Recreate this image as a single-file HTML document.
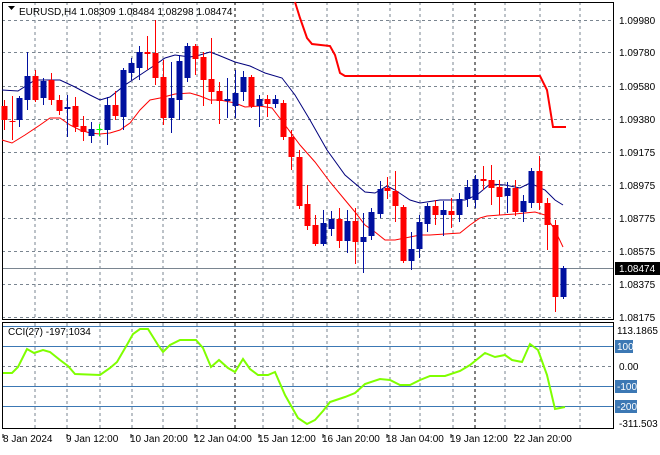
<!DOCTYPE html>
<html><head><meta charset="utf-8"><style>
body{margin:0;background:#fff;width:660px;height:450px;overflow:hidden}
svg text{font-family:"Liberation Sans",sans-serif;font-size:10px;fill:#000}
</style></head><body>
<svg width="660" height="450" xmlns="http://www.w3.org/2000/svg">
<rect width="660" height="450" fill="#fff"/>
<g stroke="#7a8590" stroke-dasharray="3,3" stroke-width="1">
<path d="M35 2V320M67 2V320M100 2V320M132 2V320M163 2V320M197 2V320M263 2V320M293 2V320M327 2V320M358 2V320M390 2V320M420 2V320M453 2V320M505 2V320M540 2V320M580 2V320"/>
<path d="M35 323V428M67 323V428M100 323V428M132 323V428M163 323V428M197 323V428M263 323V428M293 323V428M327 323V428M358 323V428M390 323V428M420 323V428M453 323V428M505 323V428M540 323V428M580 323V428"/>
<path d="M2 20.5H614M2 52.5H614M2 86.5H614M2 119.5H614M2 152.5H614M2 185.5H614M2 218.5H614M2 251.5H614M2 284.5H614M2 317.5H614M2 366.5H614"/>
</g>
<g stroke="#000" stroke-dasharray="3,3"><path d="M235 2V320M235 323V428M475 2V320M475 323V428"/></g>
<path d="M2 268.5H614" stroke="#7a8590"/>
<g stroke="#3c78b4"><path d="M2 326.5H614M2 346.5H614M2 386.5H614M2 406.5H614"/></g>
<rect x="2.5" y="2.5" width="611" height="317" fill="none" stroke="#000"/>
<rect x="2.5" y="322.5" width="611" height="106" fill="none" stroke="#000"/>
<path d="M2 90L18 91L35 80L60 80L75 87L90 95L100 100L110 97L125 85L140 75L155 65L165 58L175 55L190 57L200 55L210 52L218 55L235 62L250 66L265 73L282 78L295 95L310 120L327 150L345 175L365 192L375 193L387 186L395 190L410 200L420 203L440 200L465 200L477 195L490 184L505 185L520 188L530 183L545 190L555 200L563 205" fill="none" stroke="#00007c"/>
<path d="M2 140L12 143L25 135L40 125L50 118L60 118L70 125L80 130L90 133L100 134L110 133L120 130L130 123L140 110L150 100L160 98L175 94L190 93L200 96L210 100L220 100L235 103L245 107L260 106L272 108L285 125L300 145L315 162L330 182L345 200L355 212L365 225L375 232L385 240L395 240L405 238L420 235L430 235L445 234L460 233L470 225L480 218L487 216L500 215L515 214L525 213L535 212L545 215L555 230L563 247" fill="none" stroke="#f00"/>
<path d="M295 2L300 18L307 38L312 44L330 46L335 55L340 73L345 76L540 76L547 90L553 127L566 127" fill="none" stroke="#f00" stroke-width="2"/>
<g id="c"></g>
<path d="M3 373L12 373L18 367L27 349L34 353L43 350L50 352L60 360L68 366L75 374L100 375L110 368L117 362L128 343L133 334L140 329L148 329L158 345L163 352L170 345L180 340L196 340L203 348L211 367L219 360L228 368L235 372L243 359L250 369L258 375L268 375L275 372L285 395L298 418L307 424L315 420L323 411L330 402L345 397L355 393L365 384L380 379L390 380L400 385L410 385L420 380L430 376L445 376L460 371L470 365L485 353L495 357L505 355L512 360L522 362L530 344L538 350L547 375L555 409L560 408L565 407" fill="none" stroke="#7fff00" stroke-width="2"/>
<path d="M8 6L15 6L11.5 10Z" fill="#000"/>
<text x="19" y="15">EURUSD,H4  1.08309 1.08484 1.08298 1.08474</text>
<text x="8" y="335">CCI(27) -197.1034</text>
<g>
<text x="619" y="24">1.09980</text><text x="619" y="56">1.09780</text><text x="619" y="90">1.09580</text><text x="619" y="123">1.09380</text><text x="619" y="156">1.09175</text><text x="619" y="189">1.08975</text><text x="619" y="222">1.08775</text><text x="619" y="255">1.08575</text><text x="619" y="288">1.08375</text><text x="619" y="321">1.08175</text>
<rect x="615" y="262" width="45" height="13" fill="#000"/><text x="619" y="272" style="fill:#fff">1.08474</text>
<text x="617" y="334">113.1865</text>
<rect x="615" y="340" width="18" height="13" fill="#3c78b4"/><text x="617" y="350" style="fill:#fff">100</text>
<text x="619" y="370">0.00</text>
<rect x="615" y="380" width="22" height="13" fill="#3c78b4"/><text x="617" y="390" style="fill:#fff">-100</text>
<rect x="615" y="400" width="22" height="13" fill="#3c78b4"/><text x="617" y="410" style="fill:#fff">-200</text>
<text x="619" y="427">-311.503</text>
<text x="3" y="442">8 Jan 2024</text><text x="66" y="442">9 Jan 12:00</text><text x="130" y="442">10 Jan 20:00</text><text x="194" y="442">12 Jan 04:00</text><text x="258" y="442">15 Jan 12:00</text><text x="322" y="442">16 Jan 20:00</text><text x="386" y="442">18 Jan 04:00</text><text x="450" y="442">19 Jan 12:00</text><text x="514" y="442">22 Jan 20:00</text>
</g>
<path d="M3 434V438M67 434V438M131 434V438M195 434V438M259 434V438M323 434V438M387 434V438M451 434V438M515 434V438" stroke="#000"/>
</svg>
<script>
var d=[[4,'r',106,120,100,130],[12,'r',121,122,96,140],[19,'b',98,120,96,127],[27,'b',76,100,52,110],[35,'r',76,100,70,102],[43,'b',81,98,78,105],[51,'r',80,100,73,105],[59,'r',100,111,95,115],[67,'b',107,109,95,137],[75,'r',106,127,97,132],[83,'r',126,132,116,141],[91,'b',129,136,122,143],[99,'g',129,130,124,136],[107,'b',105,130,97,145],[115,'r',105,116,91,120],[123,'b',70,117,68,130],[131,'b',63,73,58,80],[139,'b',52,68,46,80],[147,'r',52,54,36,70],[155,'r',53,78,20,85],[163,'r',77,118,60,125],[171,'b',98,118,62,133],[179,'b',61,100,55,120],[187,'b',46,78,43,82],[195,'r',46,59,44,75],[203,'r',57,80,52,106],[211,'r',79,92,38,104],[219,'r',91,101,82,124],[227,'b',99,101,78,118],[235,'b',93,106,70,118],[243,'b',77,92,71,101],[251,'r',77,106,75,108],[259,'b',99,106,95,127],[267,'r',99,104,95,117],[275,'b',99,104,95,108],[283,'r',103,137,100,140],[291,'r',137,157,130,170],[299,'r',157,206,150,209],[307,'r',204,226,185,230],[315,'r',225,244,215,246],[323,'b',223,244,210,246],[331,'b',219,229,211,236],[339,'r',219,241,208,248],[347,'b',221,241,210,253],[355,'r',221,242,208,264],[363,'b',237,242,213,273],[371,'b',212,236,208,240],[380,'b',189,214,181,218],[387,'r',188,191,177,199],[395,'r',191,206,171,222],[403,'r',207,261,205,263],[411,'b',249,261,232,270],[419,'b',222,249,215,258],[427,'b',206,224,203,232],[435,'r',206,215,200,225],[443,'b',210,215,201,236],[451,'r',211,215,198,228],[459,'b',199,215,193,222],[467,'b',187,199,180,207],[475,'b',179,200,175,208],[483,'r',179,181,166,190],[491,'r',180,188,165,205],[499,'r',187,197,180,215],[507,'b',188,196,182,213],[515,'r',188,212,180,216],[523,'b',201,212,195,222],[531,'b',171,203,168,208],[539,'r',171,203,156,210],[547,'r',203,225,198,250],[555,'r',225,297,220,312],[563,'b',268,297,266,299]];
var s='';d.forEach(function(c){var col=c[1]=='r'?'#f00':c[1]=='b'?'#00109f':'#0f0';
s+='<path d="M'+c[0]+'.5 '+c[4]+'V'+c[5]+'" stroke="'+col+'"/>';
s+='<rect x="'+(c[0]-2.5)+'" y="'+c[2]+'" width="6" height="'+Math.max(1,c[3]-c[2])+'" fill="'+col+'"/>';});
document.getElementById('c').innerHTML=s;
</script>
</body></html>
